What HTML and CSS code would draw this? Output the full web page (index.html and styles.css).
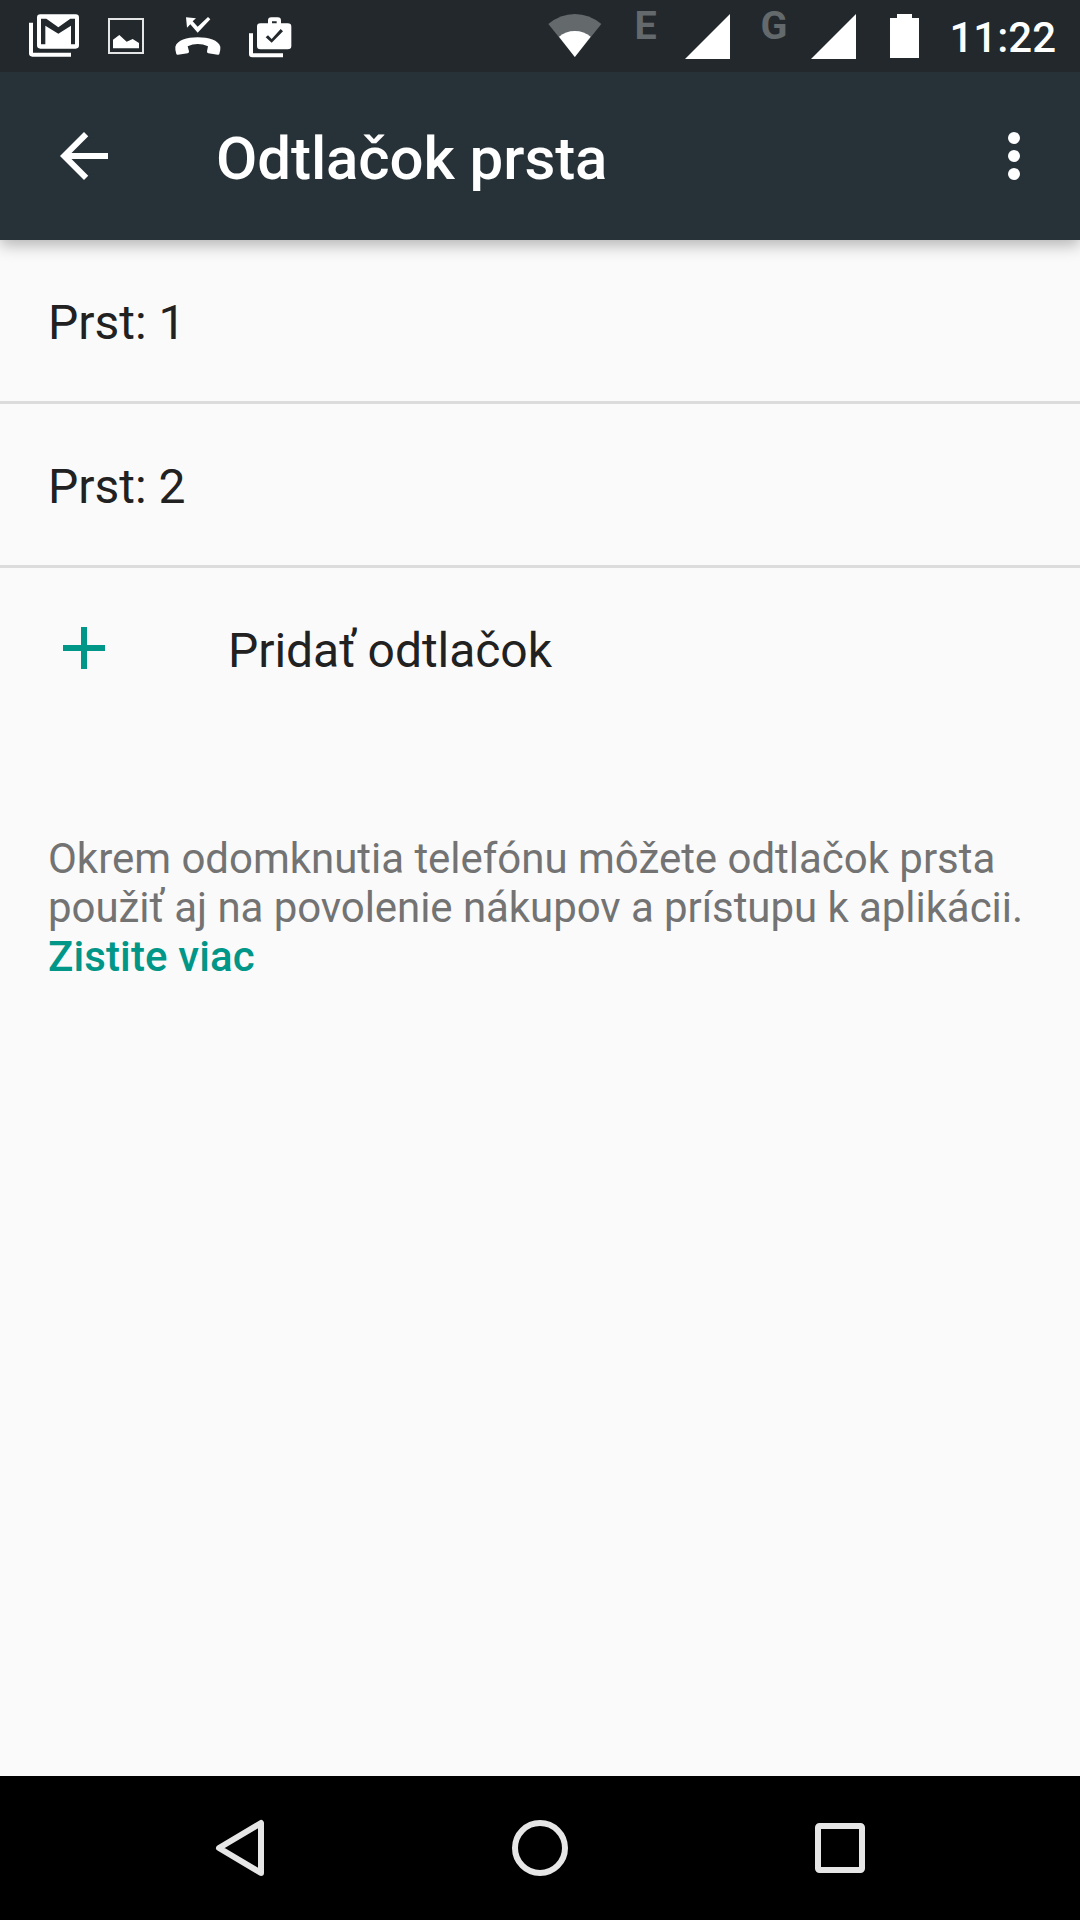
FILE: index.html
```html
<!DOCTYPE html>
<html lang="sk">
<head>
<meta charset="utf-8">
<title>Odtlačok prsta</title>
<link rel="stylesheet" href="styles.css">
</head>
<body>
<div class="screen">
  <div class="status-bar">
    <div class="notifications">
      <svg class="icon" width="50" height="43" viewBox="87 43 150 129">
        <path class="fill" fill-rule="evenodd" d="M121 44H227Q237 44 237 54V137Q237 147 227 147H121Q111 147 111 137V54Q111 44 121 44ZM123 57V134H136V78L175 102L213 78V134H225V57H211L175 83L139 57Z"/>
        <path class="fill" d="M87 69H99V159H213V171H97Q87 171 87 161Z"/>
      </svg>
      <svg class="icon" width="36" height="36" viewBox="324 54 108 108">
        <rect class="frame" x="327" y="57" width="102" height="102"/>
        <path class="fill" d="M339 145V119L358 105L380 125L398 117L417 129V145Z"/>
      </svg>
      <svg class="icon" width="46" height="38" viewBox="525 50 138 114">
        <path class="fill" d="M558 51L588 54L578 63L593 79L624 50L631 57L593 97L571 72L561 82Z"/>
        <path class="fill" d="M529 161Q525 150 526 139C532 120 560 111 593 111C627 111 655 120 661 139Q662 150 658 161Q657 164 653 163L625 159Q620 158 621 153L624 138Q609 131 593 131Q578 131 563 138L567 153Q568 158 563 159L534 163Q530 164 529 161Z"/>
      </svg>
      <svg class="icon" width="43" height="41" viewBox="747 50 129 123">
        <path class="fill" fill-rule="evenodd" d="M781 69H804V61Q804 51 814 51H833Q843 51 843 61V69H863Q874 69 874 79V137Q874 147 863 147H781Q771 147 771 137V79Q771 69 781 69ZM816 69H830V63H816ZM797 111L804 105L815 116L842 86L849 93L815 127Z"/>
        <path class="fill" d="M747 99H759V159H849V171H757Q747 171 747 161Z"/>
      </svg>
    </div>
    <div class="system">
      <svg class="icon wifi" width="54" height="43" viewBox="53 42 162 129">
        <path class="dim" d="M133.500 171L54 72Q90 42 133.500 42T213 72Z"/>
        <path class="fill" d="M133.500 171L86 110Q106 93 133.500 93T181 110Z"/>
      </svg>
      <span class="network network-e">E</span>
      <svg class="icon signal" width="45" height="45" viewBox="0 0 45 45"><path class="fill" d="M45 0V45H0Z"/></svg>
      <span class="network network-g">G</span>
      <svg class="icon signal" width="45" height="45" viewBox="0 0 45 45"><path class="fill" d="M45 0V45H0Z"/></svg>
      <svg class="icon battery" width="29" height="44" viewBox="0 0 29 44"><path class="fill" d="M7 0H22V4H29V44H0V4H7Z"/></svg>
      <span class="clock">11:22</span>
    </div>
  </div>
  <header class="app-bar">
    <svg class="icon" width="72" height="72" viewBox="0 0 24 24"><path class="fill" d="M20 11H7.830l5.590-5.590L12 4l-8 8 8 8 1.410-1.410L7.830 13H20z"/></svg>
    <h1 class="title">Odtlačok prsta</h1>
    <svg class="icon" width="72" height="72" viewBox="0 0 24 24"><circle class="fill" cx="12" cy="6" r="2"/><circle class="fill" cx="12" cy="12" r="2"/><circle class="fill" cx="12" cy="18" r="2"/></svg>
  </header>
  <main class="content">
    <div class="row">Prst: 1</div>
    <div class="row">Prst: 2</div>
    <div class="row row-add">
      <svg class="icon" width="72" height="72" viewBox="0 0 24 24"><path class="accent" d="M19 13h-6v6h-2v-6H5v-2h6V5h2v6h6z"/></svg>
      <span>Pridať odtlačok</span>
    </div>
    <p class="hint">Okrem odomknutia telefónu môžete odtlačok prsta<br><span class="hint-tight">použiť aj na povolenie nákupov a prístupu k aplikácii.</span><br><a class="link">Zistite viac</a></p>
  </main>
  <nav class="nav-bar">
    <svg class="nav-icon" width="60" height="60" viewBox="0 0 60 60"><path d="M51 5V55L9 30Z"/></svg>
    <svg class="nav-icon" width="60" height="60" viewBox="0 0 60 60"><circle cx="30" cy="30" r="25"/></svg>
    <svg class="nav-icon" width="60" height="60" viewBox="0 0 60 60"><rect x="8" y="8" width="44" height="44" rx="1.500"/></svg>
  </nav>
</div>
</body>
</html>
```
FILE: styles.css
```css
* {
  box-sizing: border-box;
}

body {
  margin: 0;
  font-family: Roboto, "Noto Sans", sans-serif;
  color: #212121;
  background: #fafafa;
}

.screen {
  display: flex;
  flex-direction: column;
  width: 1080px;
  height: 1920px;
  overflow: hidden;
}

.icon {
  display: block;
  flex: none;
}

.fill {
  fill: #fff;
}

.dim {
  fill: #64696c;
}

.accent {
  fill: #009688;
}

.frame {
  fill: none;
  stroke: #e4e5e5;
  stroke-width: 6;
}

.status-bar {
  position: relative;
  z-index: 1;
  display: flex;
  justify-content: space-between;
  height: 72px;
  padding: 14px 24px 0 29px;
  background: #22282c;
}

.notifications {
  display: flex;
  align-items: flex-start;
  gap: 29px;
}

.notifications .icon:nth-child(2) {
  margin-top: 4px;
}

.notifications .icon:nth-child(3) {
  margin: 3px -1px 0 2px;
}

.notifications .icon:nth-child(4) {
  margin-top: 3px;
}

.system {
  display: flex;
  align-items: flex-start;
}

.network {
  font-size: 39.500px;
  font-weight: 700;
  line-height: 46px;
  color: #64696c;
}

.network-e {
  width: 51px;
  margin: -11px 0 0 32px;
}

.network-g {
  width: 51px;
  margin: -11px 0 0 30px;
}

.battery {
  margin-left: 34px;
}

.clock {
  margin-left: 30px;
  font-size: 42px;
  font-weight: 500;
  line-height: 48px;
}

.clock,
.title {
  color: #fff;
}

.app-bar {
  position: relative;
  display: flex;
  align-items: center;
  height: 168px;
  padding: 0 30px 0 48px;
  background: #273238;
  box-shadow: 0 5px 15px rgba(0, 0, 0, 0.29);
}

.title {
  flex: 1;
  margin: 5px 0 0 96px;
  font-size: 60px;
  font-weight: 500;
  line-height: 70px;
  letter-spacing: -0.08px;
}

.content {
  flex: 1;
}

.row {
  display: flex;
  align-items: center;
  height: 164px;
  padding: 4px 48px 0;
  border-bottom: 3px solid #dcdcdc;
  font-size: 48px;
}

.row-add {
  gap: 108px;
  border-bottom: 0;
  height: 161px;
  letter-spacing: -0.05px;
}

.row-add .icon {
  margin: -6px 0 0;
}

.hint {
  margin: 105px 40px 0 48px;
  font-size: 42px;
  line-height: 49px;
  color: #737373;
  white-space: nowrap;
  letter-spacing: -0.025px;
}

.hint-tight {
  letter-spacing: -0.06px;
}

.link {
  font-weight: 500;
  color: #009688;
  letter-spacing: 0.12px;
}

.nav-bar {
  display: flex;
  align-items: center;
  justify-content: center;
  gap: 240px;
  height: 144px;
  background: #000;
}

.nav-icon {
  fill: none;
  stroke: #e6e6e6;
  stroke-width: 6;
  stroke-linejoin: round;
}
```
